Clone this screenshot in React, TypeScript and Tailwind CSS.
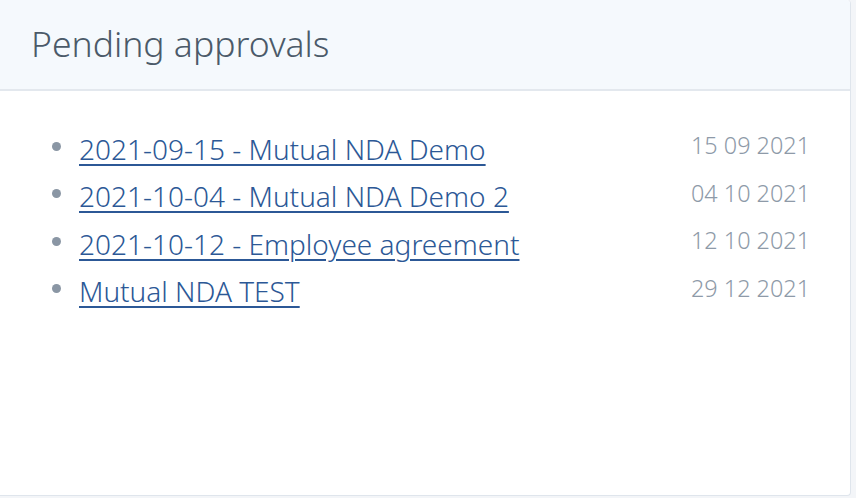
import React from "react";

const items = [
  { title: "2021-09-15 - Mutual NDA Demo", date: "15 09 2021" },
  { title: "2021-10-04 - Mutual NDA Demo 2", date: "04 10 2021" },
  { title: "2021-10-12 - Employee agreement", date: "12 10 2021" },
  { title: "Mutual NDA TEST", date: "29 12 2021" },
];

export default function App() {
  return (
    <div
      className="w-[856px] h-[498px] bg-[#f3f5f8] overflow-hidden"
      style={{ fontFamily: '"Noto Sans", "Open Sans", sans-serif' }}
    >
      <div className="w-[851px] h-[496px] bg-white border-r border-b border-[#dfe5ec] rounded-br-[4px] rounded-tr-[4px] flex flex-col">
        <div className="h-[91px] shrink-0 bg-[#f5f9fd] border-b-2 border-[#e3e8ee] flex items-center pl-[31px] rounded-tr-[4px]">
          <h2 className="text-[35.5px] leading-none text-[#4b5a69] font-light -mt-[1px]">
            Pending approvals
          </h2>
        </div>
        <ul className="pt-[34px] pl-[52px] pr-[40px] flex flex-col">
          {items.map((it) => (
            <li key={it.title} className="h-[47.5px] flex items-center">
              <span className="w-[9px] h-[9px] rounded-full bg-[#8a96a4] shrink-0 mr-[18px] -mt-[5px]" />
              <a
                href="#"
                className="text-[28px] leading-none font-light text-[#2c5896] underline decoration-2 underline-offset-4 decoration-[#2c5896]"
              >
                {it.title}
              </a>
              <span className="ml-auto text-[23.4px] leading-none font-light text-[#8e9aa8] -mt-[6px]">
                {it.date}
              </span>
            </li>
          ))}
        </ul>
      </div>
    </div>
  );
}
